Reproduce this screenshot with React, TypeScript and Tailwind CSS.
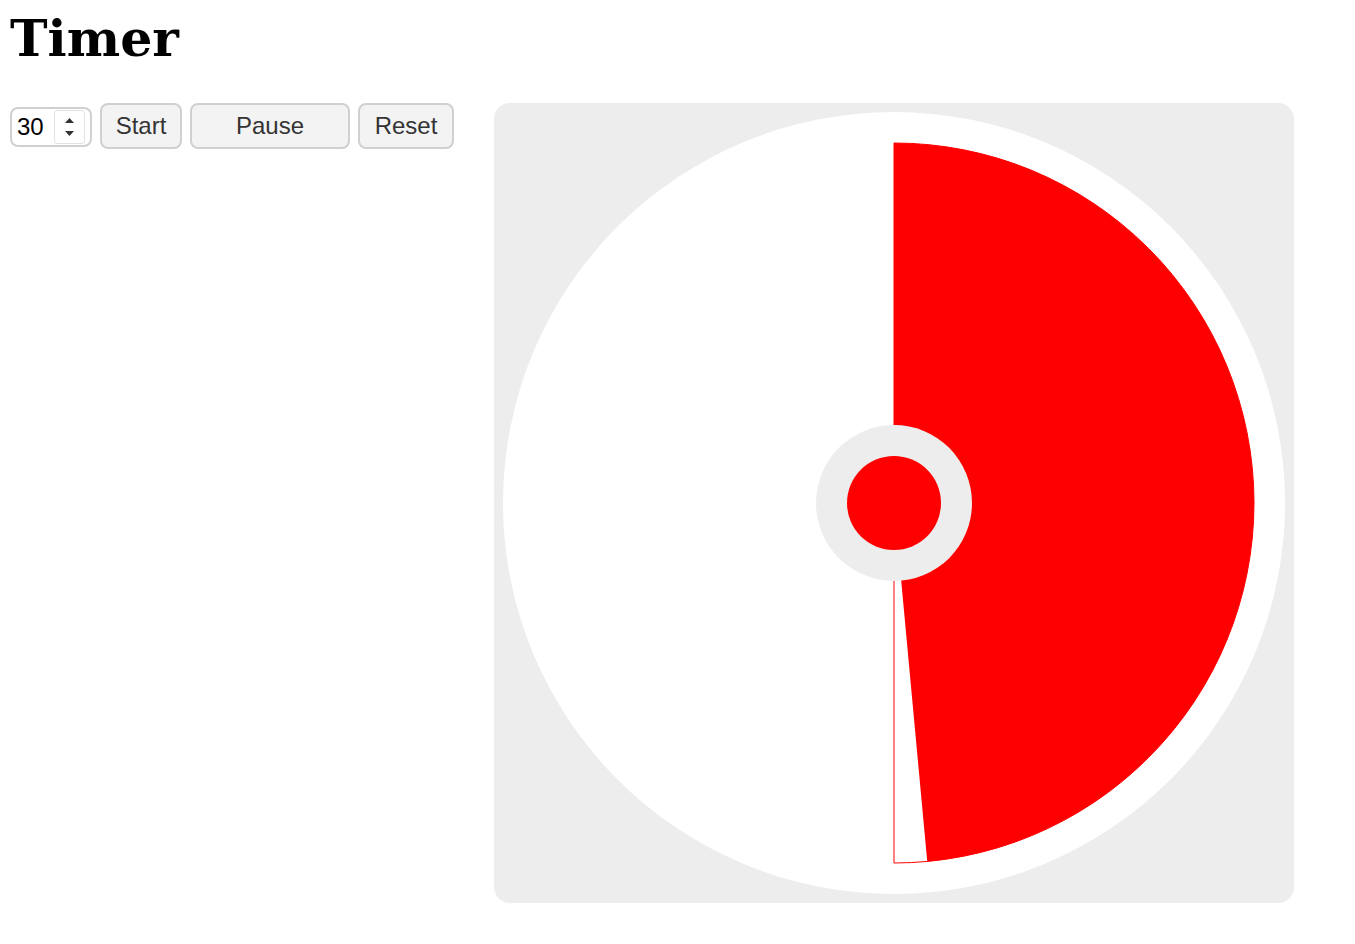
import { useState } from "react";

const SIZE = 800;
const C = SIZE / 2;
const R_OUTER = 391;
const R_SECTOR = 360;

function sectorPath(r: number, deg: number) {
  const a = (deg * Math.PI) / 180;
  const x = C + r * Math.sin(a);
  const y = C - r * Math.cos(a);
  const large = deg > 180 ? 1 : 0;
  return `M${C},${C} L${C},${C - r} A${r},${r} 0 ${large} 1 ${x.toFixed(2)},${y.toFixed(2)} Z`;
}

function Dial({ progress }: { progress: number }) {
  return (
    <div className="h-[800px] w-[800px] shrink-0 rounded-2xl bg-[#ededed]">
      <svg width={SIZE} height={SIZE} viewBox={`0 0 ${SIZE} ${SIZE}`}>
        <circle cx={C} cy={C} r={R_OUTER} fill="#ffffff" />
        {/* outline of the current half */}
        <path d={sectorPath(R_SECTOR, 180)} fill="none" stroke="#ff0000" strokeWidth={1} />
        <path d={sectorPath(R_SECTOR, progress * 360)} fill="#ff0000" />
        <circle cx={C} cy={C} r={78} fill="#ededed" />
        <circle cx={C} cy={C} r={47} fill="#ff0000" />
      </svg>
    </div>
  );
}

function NumberField({ value, onChange }: { value: string; onChange: (v: string) => void }) {
  const step = (d: number) => onChange(String((parseInt(value, 10) || 0) + d));

  return (
    <div className="flex h-10 w-[82px] items-center rounded-lg border-2 border-[#d0d0d0] bg-white pl-[5px] pr-[5px]">
      <input
        type="text"
        inputMode="numeric"
        value={value}
        onChange={(event) => onChange(event.target.value)}
        className="w-0 min-w-0 flex-1 bg-transparent text-[24px] text-black outline-none"
      />
      <div className="flex h-[34px] w-[31px] shrink-0 flex-col items-center rounded-[3px] border border-[#e2e2e2] bg-white">
        <button onClick={() => step(1)} className="flex h-1/2 w-full items-center justify-center pt-[3px]">
          <svg width="9" height="5" viewBox="0 0 9 5">
            <path d="M4.5 0 L9 5 L0 5 Z" fill="#333" />
          </svg>
        </button>
        <button onClick={() => step(-1)} className="flex h-1/2 w-full items-center justify-center pb-[2px]">
          <svg width="9" height="5" viewBox="0 0 9 5">
            <path d="M0 0 L9 0 L4.5 5 Z" fill="#333" />
          </svg>
        </button>
      </div>
    </div>
  );
}

export default function App() {
  const [seconds, setSeconds] = useState("30");

  const buttonClass =
    "h-[46px] rounded-lg border-2 border-[#d0d0d0] bg-[#f3f3f3] text-[24px] leading-[1.15] text-[#333]";

  return (
    <div className="min-h-screen bg-white p-[10px] font-['Liberation_Sans',Arial,sans-serif]">
      <h1 className="m-0 font-['DejaVu_Serif',serif] text-[50.5px] font-bold leading-[58px] text-black">Timer</h1>

      <div className="mt-[35px] flex items-start gap-10">
        <div className="flex w-[444px] items-center gap-2">
          <div className="pt-[1px]">
            <NumberField value={seconds} onChange={setSeconds} />
          </div>
          <button className={`${buttonClass} w-[82px]`}>Start</button>
          <button className={`${buttonClass} w-40`}>Pause</button>
          <button className={`${buttonClass} w-24`}>Reset</button>
        </div>

        <Dial progress={174.7 / 360} />
      </div>
    </div>
  );
}
